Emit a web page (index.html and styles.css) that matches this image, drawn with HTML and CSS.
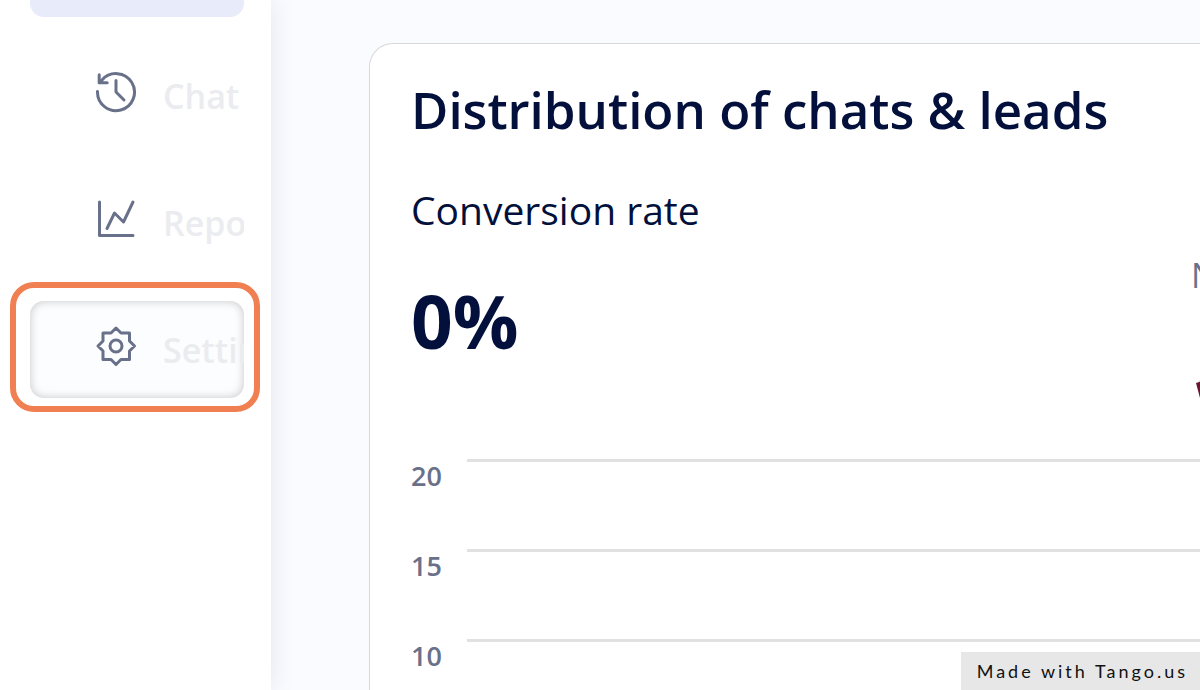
FILE: index.html
```
<!DOCTYPE html>
<html lang="en">
<head>
    <title>Dashboard</title>
    <meta charset="utf-8" />
    <meta name="viewport" content="width=device-width, initial-scale=1">
    <link rel="stylesheet" href="styles.css">
</head>

<body>

<div class="app">
    <nav class="sidebar">
        <ul class="menu">
            <li><a class="item item-cur" href="#" aria-label="Dashboard"></a></li>
            <li>
                <a class="item" href="#">
                    <svg class="icon" viewBox="0 0 42 42">
                        <path d="M2.500 20.500A18.500 18.500 0 1 0 7 9L4.200 11.800M4.200 3.800V11.800H12.200"/>
                        <path d="M21 9.500V21L29 29"/>
                    </svg>
                    <span>Chat</span>
                </a>
            </li>
            <li>
                <a class="item" href="#">
                    <svg class="icon" viewBox="0 0 42 42">
                        <path d="M4.500 4V37.500H38M12 30.500L19.500 15L28.500 24L38 4"/>
                    </svg>
                    <span>Repo</span>
                </a>
            </li>
            <li class="marked">
                <a class="item item-hover" href="#">
                    <svg class="icon" viewBox="0 0 42 42">
                        <path d="M21 3L26 8H34.500V16L39.500 21L34.500 26V34.500H26L21 39.500L16 34.500H8V26L3 21L8 16V8H16Z"/>
                        <circle cx="21" cy="21" r="6"/>
                    </svg>
                    <span>Settings</span>
                </a>
            </li>
        </ul>
    </nav>
    <main class="main">
        <section class="card">
            <h1>Distribution of chats &amp; leads</h1>
            <div class="stats">
                <div class="rate">
                    <h2>Conversion rate</h2>
                    <p class="rate-num">0%</p>
                </div>
                <div class="share">
                    <p>N</p>
                    <svg class="pie" viewBox="0 0 16 24">
                        <path fill="#dcdcdf" d="M3 5L16 -8V5Z"/>
                        <path fill="#6b1730" d="M1 6L16 1V62Z"/>
                    </svg>
                </div>
            </div>
            <ul class="chart">
                <li><span>20</span></li>
                <li><span>15</span></li>
                <li><span>10</span></li>
            </ul>
        </section>
    </main>
</div>
<a class="badge" href="#">Made with Tango.us</a>

</body>
</html>
```
FILE: styles.css
```
*{margin:0;padding:0;box-sizing:border-box;}
li{list-style-type:none;}
a{text-decoration:none;color:inherit;}

body,html{height:100%;overflow:hidden;}
body{font-family:"Open Sans","Noto Sans",sans-serif;color:#03103c;background:#fafbff;}

.app{display:flex;height:100%;overflow:hidden;}

.sidebar{flex:none;width:271px;padding:0 27px 0 30px;background:#fff;box-shadow:0 0 24px rgba(30,40,90,.1);position:relative;z-index:2;}
.menu{display:flex;flex-direction:column;gap:30px;}
.item{display:flex;align-items:center;gap:26px;height:97px;padding:1px 0 0 65px;border-radius:14px;overflow:hidden;color:#ebecef;font-size:34px;font-weight:600;}
.item-cur{height:17px;border-radius:0 0 14px 14px;background:#e8ebfa;}
.item-hover{background:#fcfdff;box-shadow:inset 0 0 10px rgba(0,0,0,.22);}
.icon{flex:none;width:42px;height:42px;margin-bottom:8px;fill:none;stroke:#69718a;stroke-width:3;stroke-linecap:round;stroke-linejoin:round;}

.marked{position:relative;}
.marked:after{content:"";position:absolute;top:-19px;right:-16px;bottom:-14px;left:-20px;border:6px solid #f08052;border-radius:24px;pointer-events:none;}

.main{flex:1;min-width:0;padding:43px 0 0 98px;}
.card{padding:30px 0 0 41px;border:1px solid #d8d8d8;border-right:0;border-radius:24px 0 0 0;background:#fff;}
h1{font-size:51px;line-height:70px;font-weight:600;}

.stats{display:flex;justify-content:space-between;margin-top:39px;}
h2{font-size:39px;line-height:54px;font-weight:400;}
.rate-num{margin-top:34px;font-size:73px;line-height:100px;font-weight:700;}
.share{width:9px;padding-top:69px;color:#69718a;font-size:34px;line-height:46px;overflow:hidden;}
.pie{display:block;width:16px;height:24px;margin:79px 0 0 4px;}

.chart{margin-top:58px;}
.chart li{display:flex;gap:24px;height:90px;color:#69718a;font-size:27px;line-height:34px;font-weight:600;}
.chart li:after{content:"";flex:1;border-top:3px solid #e1e1e1;}
.chart span{width:32px;}

.badge{position:fixed;right:0;bottom:0;padding:6px 12px 6px 16px;background:#e7e7e7;color:#111;font-family:Lato,sans-serif;font-size:18px;line-height:26px;letter-spacing:3px;}
```
